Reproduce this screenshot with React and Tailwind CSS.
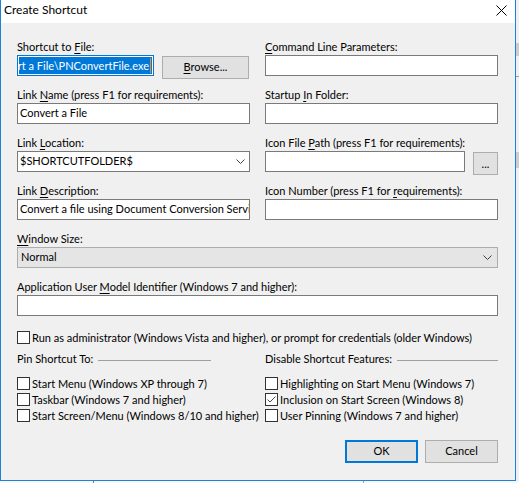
import React from 'react';

const U = ({ children }) => <span className="underline underline-offset-[2px]">{children}</span>;

const Label = ({ children }) => (
    <div className="h-[15px] leading-[15px] mb-[1px] whitespace-nowrap">{children}</div>
);

const Box = ({ children, className = '' }) => (
    <div className={`h-[21px] border border-[#7a7a7a] bg-white flex items-center pl-[2px] whitespace-nowrap overflow-hidden ${className}`}>
        {children}
    </div>
);

const Chevron = () => (
    <svg width="9" height="5" viewBox="0 0 9 5" className="shrink-0">
        <polyline points="0.5,0.5 4.5,4.5 8.5,0.5" fill="none" stroke="#404040" strokeWidth="1" />
    </svg>
);

const Button = ({ children, className = '' }) => (
    <div className={`h-[23px] bg-[#e1e1e1] flex items-center justify-center shrink-0 ${className}`}>
        {children}
    </div>
);

const Check = ({ checked, children }) => (
    <div className="flex items-center h-[13px] gap-[2px] whitespace-nowrap">
        <div className="w-[13px] h-[13px] border border-[#333333] bg-white shrink-0 flex items-center justify-center">
            {checked && (
                <svg width="11" height="11" viewBox="0 0 11 11">
                    <polyline points="1.5,5.5 4,8 9.5,2.5" fill="none" stroke="#4a4a4a" strokeWidth="1" />
                </svg>
            )}
        </div>
        <span className="leading-[13px]">{children}</span>
    </div>
);

const GroupHeader = ({ children, className = '' }) => (
    <div className={`flex items-center h-[15px] whitespace-nowrap ${className}`}>
        <span>{children}</span>
        <div className="flex-1 h-px bg-[#a0a0a0] ml-[5px] mt-px"></div>
    </div>
);

const App = () => {
    return (
        <div className="w-[519px] h-[483px] overflow-hidden flex flex-col bg-[#f0f0f0] text-[11px] text-black font-['Lato',sans-serif]">
            <div className="flex h-[481px]">
                {/* Dialog window */}
                <div className="w-[516px] flex flex-col border-l border-r border-b border-[#1a82d8]">
                    {/* Title bar */}
                    <div className="h-[23px] bg-white flex items-start justify-between shrink-0">
                        <div className="h-[15px] leading-[15px] mt-[2px] ml-[3px] text-[12px]">Create Shortcut</div>
                        <svg width="11" height="11" viewBox="0 0 11 11" className="mt-[5px] mr-[8px]">
                            <line x1="0.5" y1="0.5" x2="10.5" y2="10.5" stroke="#000" strokeWidth="1" />
                            <line x1="10.5" y1="0.5" x2="0.5" y2="10.5" stroke="#000" strokeWidth="1" />
                        </svg>
                    </div>

                    {/* Body */}
                    <div className="flex-1 flex flex-col pt-[16px] pl-[16px] pr-[17px]">
                        <div className="grid grid-cols-2 gap-x-[15px] gap-y-[11px]">
                            <div>
                                <Label>Shortcut to <U>F</U>ile:</Label>
                                <div className="flex h-[21px] gap-[8px]">
                                    <div className="w-[137px] h-[21px] border border-[#0078d7] bg-white p-px overflow-hidden">
                                        <div className="h-full bg-[#0078d7] text-white flex items-center justify-end whitespace-nowrap overflow-hidden">
                                            <span className="leading-[15px]">rt a File\PNConvertFile.exe</span>
                                            <div className="w-px h-[15px] bg-[#f28c28] ml-px mr-px shrink-0"></div>
                                        </div>
                                    </div>
                                    <Button className="w-[87px] mt-[1px] border border-[#adadad]">
                                        <span><U>B</U>rowse...</span>
                                    </Button>
                                </div>
                            </div>
                            <div>
                                <Label><U>C</U>ommand Line Parameters:</Label>
                                <Box />
                            </div>

                            <div>
                                <Label>Link <U>N</U>ame (press F1 for requirements):</Label>
                                <Box>Convert a File</Box>
                            </div>
                            <div>
                                <Label>Startup <U>I</U>n Folder:</Label>
                                <Box />
                            </div>

                            <div>
                                <Label>Link <U>L</U>ocation:</Label>
                                <Box className="justify-between pr-[4px]">
                                    <span>$SHORTCUTFOLDER$</span>
                                    <Chevron />
                                </Box>
                            </div>
                            <div>
                                <Label>Icon File <U>P</U>ath (press F1 for requirements):</Label>
                                <div className="flex h-[21px] gap-[8px]">
                                    <Box className="w-[202px]" />
                                    <Button className="w-[25px] mt-[1px] border border-[#adadad]">
                                        <span className="leading-[10px]">...</span>
                                    </Button>
                                </div>
                            </div>

                            <div>
                                <Label>Link <U>D</U>escription:</Label>
                                <Box>Convert a file using Document Conversion Services</Box>
                            </div>
                            <div>
                                <Label>Icon Number (press F1 for <U>r</U>equirements):</Label>
                                <Box />
                            </div>
                        </div>

                        <div className="mt-[11px]">
                            <Label><U>W</U>indow Size:</Label>
                            <div className="h-[21px] border border-[#adadad] bg-[#e5e5e5] flex items-center justify-between pl-[3px] pr-[5px]">
                                <span>Normal</span>
                                <Chevron />
                            </div>
                        </div>

                        <div className="mt-[11px]">
                            <Label>Application User <U>M</U>odel Identifier (Windows 7 and higher):</Label>
                            <Box />
                        </div>

                        <div className="mt-[15px]">
                            <Check>Run as administrator (Windows Vista and higher), or prompt for credentials (older Windows)</Check>
                        </div>

                        <div className="grid grid-cols-2 gap-x-[15px] mt-[8px]">
                            <div className="flex flex-col">
                                <GroupHeader className="w-[194px]">Pin Shortcut To:</GroupHeader>
                                <div className="flex flex-col gap-[3px] mt-[10px]">
                                    <Check>Start Menu (Windows XP through 7)</Check>
                                    <Check>Taskbar (Windows 7 and higher)</Check>
                                    <Check>Start Screen/Menu (Windows 8/10 and higher)</Check>
                                </div>
                            </div>
                            <div className="flex flex-col">
                                <GroupHeader>Disable Shortcut Features:</GroupHeader>
                                <div className="flex flex-col gap-[3px] mt-[10px]">
                                    <Check>Highlighting on Start Menu (Windows 7)</Check>
                                    <Check checked>Inclusion on Start Screen (Windows 8)</Check>
                                    <Check>User Pinning (Windows 7 and higher)</Check>
                                </div>
                            </div>
                        </div>

                        <div className="flex justify-end gap-[7px] mt-[18px]">
                            <Button className="w-[73px] border-2 border-[#0078d7]">OK</Button>
                            <Button className="w-[73px] border border-[#adadad]">Cancel</Button>
                        </div>
                    </div>
                </div>

                {/* Edge of the window behind */}
                <div className="flex-1 flex flex-col bg-[#f0f0f0]">
                    <div className="h-[43px]"></div>
                    <div className="h-[13px] bg-[#cdcdcd]"></div>
                    <div className="h-[20px]"></div>
                    <div className="h-px bg-[#a0a0a0]"></div>
                    <div className="h-[75px]"></div>
                    <div className="h-[16px] bg-[#cdcdcd]"></div>
                </div>
            </div>

            {/* Strip of the window behind */}
            <div className="flex-1 flex bg-[#f7f7f7]">
                <div className="w-[93px]"></div>
                <div className="w-px bg-[#7a7a7a]"></div>
                <div className="w-[269px]"></div>
                <div className="w-px bg-[#a0a0a0]"></div>
            </div>
        </div>
    );
};

export default App;
